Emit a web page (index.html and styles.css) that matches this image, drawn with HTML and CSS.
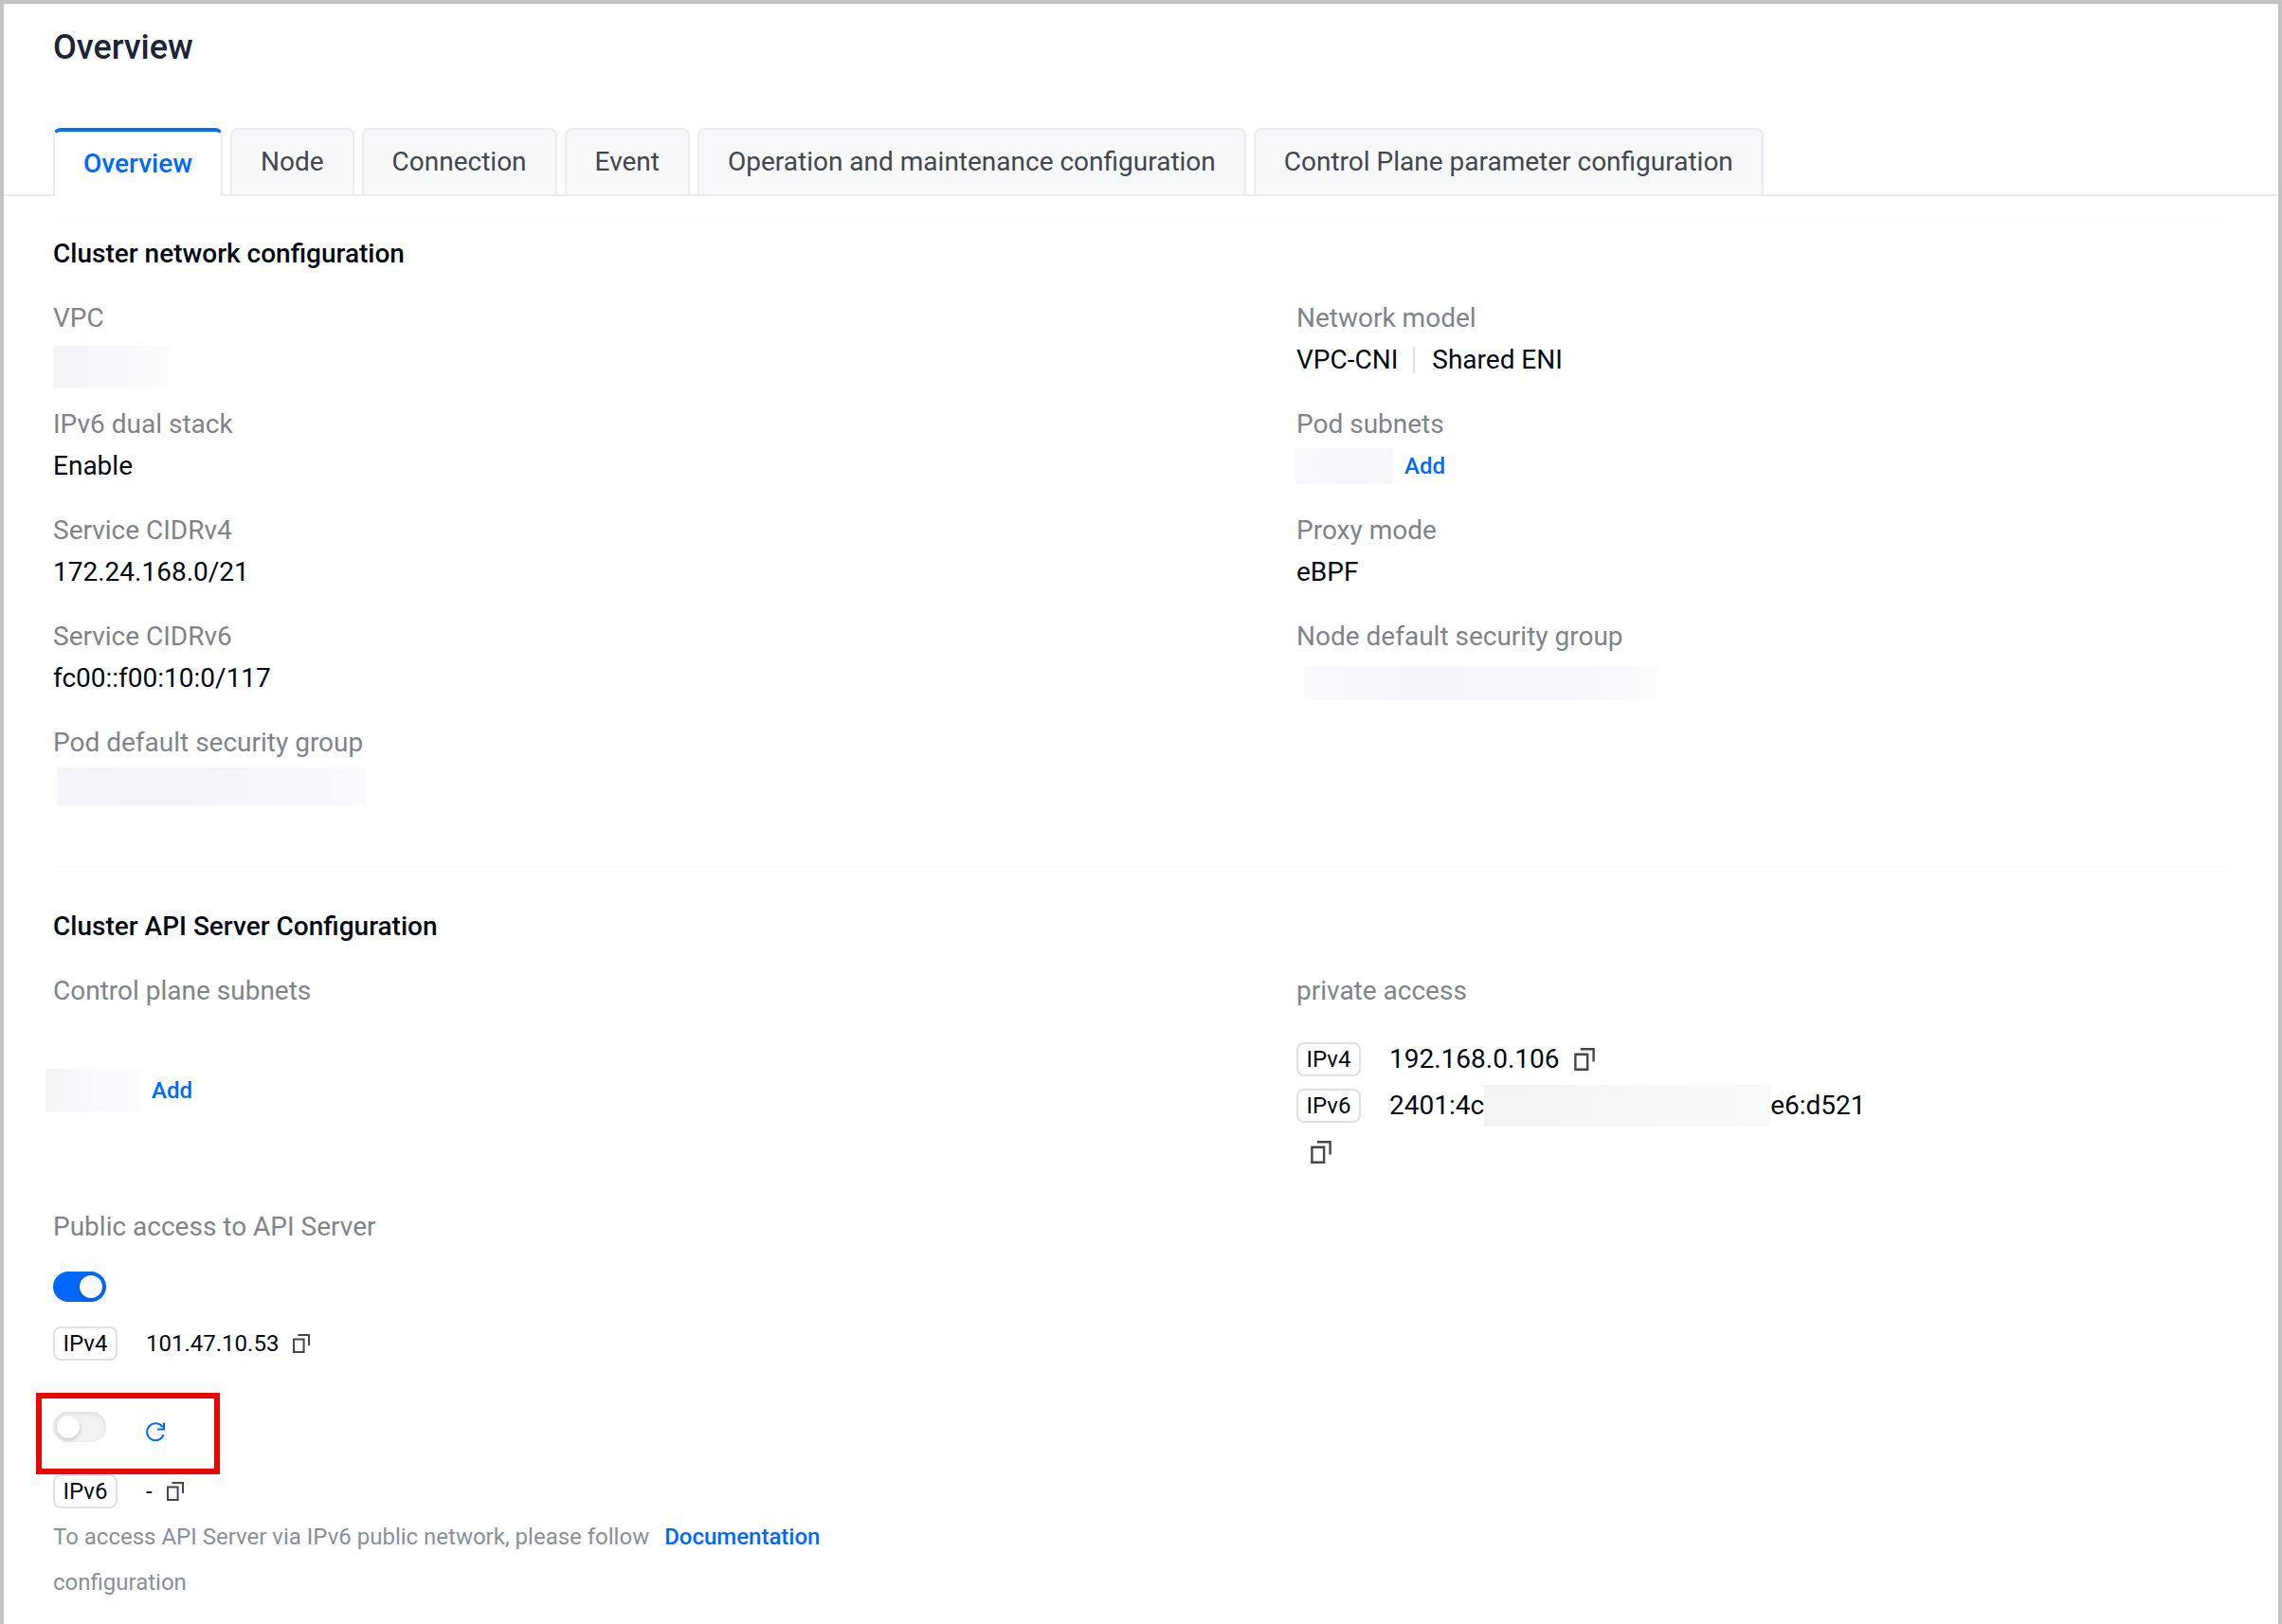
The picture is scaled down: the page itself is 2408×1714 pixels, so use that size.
FILE: index.html
```html
<!DOCTYPE html>
<html lang="en">
<head>
<meta charset="utf-8">
<title>Cluster overview</title>
<link rel="stylesheet" href="styles.css">
</head>
<body>
<svg class="sprite" aria-hidden="true">
  <symbol id="copy" viewBox="0 0 20 20">
    <path d="M2 5.6h10.6V19H2zM6.5 1H18v11" fill="none" stroke="currentColor" stroke-width="2"/>
  </symbol>
  <symbol id="refresh" viewBox="0 0 20 20">
    <path d="M18.6 13.2A9 9 0 1 1 17.6 5.2" fill="none" stroke="currentColor" stroke-width="2"/>
    <path d="M19 .4V7.4H12.2" fill="none" stroke="currentColor" stroke-width="2"/>
  </symbol>
</svg>
<main class="page">
  <h1 class="page-title">Overview</h1>
  <nav class="tabs">
    <button class="tab tab-active" type="button">Overview</button>
    <button class="tab" type="button">Node</button>
    <button class="tab" type="button">Connection</button>
    <button class="tab" type="button">Event</button>
    <button class="tab" type="button">Operation and maintenance configuration</button>
    <button class="tab" type="button">Control Plane parameter configuration</button>
  </nav>

  <section class="section section-network">
    <h2 class="section-title">Cluster network configuration</h2>
    <div class="columns">
      <dl class="fields">
        <div class="field"><dt>VPC</dt><dd><span class="mask mask-vpc"></span></dd></div>
        <div class="field"><dt>IPv6 dual stack</dt><dd>Enable</dd></div>
        <div class="field"><dt>Service CIDRv4</dt><dd>172.24.168.0/21</dd></div>
        <div class="field"><dt>Service CIDRv6</dt><dd>fc00::f00:10:0/117</dd></div>
        <div class="field"><dt>Pod default security group</dt><dd><span class="mask mask-pod-group"></span></dd></div>
      </dl>
      <dl class="fields">
        <div class="field"><dt>Network model</dt><dd><span>VPC-CNI</span><span class="divider"></span><span>Shared ENI</span></dd></div>
        <div class="field"><dt>Pod subnets</dt><dd><span class="mask mask-pod-subnet"></span><a class="link" href="#">Add</a></dd></div>
        <div class="field"><dt>Proxy mode</dt><dd>eBPF</dd></div>
        <div class="field"><dt>Node default security group</dt><dd><span class="mask mask-node-group"></span></dd></div>
      </dl>
    </div>
  </section>

  <section class="section section-api">
    <h2 class="section-title">Cluster API Server Configuration</h2>
    <div class="columns">
      <div>
        <h3 class="label">Control plane subnets</h3>
        <div class="subnets"><span class="mask mask-control"></span><a class="link" href="#">Add</a></div>
      </div>
      <div>
        <h3 class="label">private access</h3>
        <div class="private">
          <div class="address"><span class="badge">IPv4</span><span class="address-text">192.168.0.106</span><button class="icon-button" type="button" aria-label="Copy"><svg class="icon icon-large"><use href="#copy"/></svg></button></div>
          <div class="address"><span class="badge">IPv6</span><span class="address-text">2401:4c<span class="mask mask-address"></span>e6:d521</span></div>
          <div class="address address-wrap"><button class="icon-button" type="button" aria-label="Copy"><svg class="icon icon-large"><use href="#copy"/></svg></button></div>
        </div>
      </div>
    </div>

    <div class="public">
      <h3 class="label">Public access to API Server</h3>
      <div class="switch-row"><input class="switch" type="checkbox" checked aria-label="IPv4 public access"></div>
      <div class="address address-small"><span class="badge">IPv4</span><span class="address-text">101.47.10.53</span><button class="icon-button" type="button" aria-label="Copy"><svg class="icon"><use href="#copy"/></svg></button></div>
      <div class="switch-row switch-row-marked">
        <input class="switch" type="checkbox" aria-label="IPv6 public access">
        <button class="icon-button refresh" type="button" aria-label="Refresh"><svg class="icon"><use href="#refresh"/></svg></button>
      </div>
      <div class="address address-small"><span class="badge">IPv6</span><span class="address-text">-</span><button class="icon-button" type="button" aria-label="Copy"><svg class="icon"><use href="#copy"/></svg></button></div>
      <p class="note">To access API Server via IPv6 public network, please follow <a class="link" href="#">Documentation</a> configuration</p>
    </div>
  </section>
</main>
</body>
</html>
```
FILE: styles.css
```css
* { box-sizing: border-box; }

body {
  margin: 0;
  background: #fff;
  color: #020814;
  font-family: Roboto, "Liberation Sans", sans-serif;
  font-size: 28px;
  line-height: 44px;
}

h1, h2, h3, dl, dd, p { margin: 0; }
button { font: inherit; padding: 0; border: 0; background: none; color: inherit; }

.sprite { display: none; }

.page {
  min-height: 100vh;
  border: 4px solid #c2c2c2;
}

.page-title {
  padding: 22px 52px 0;
  font-size: 36px;
  font-weight: 500;
  line-height: 48px;
  color: #1d2438;
}

/* Tabs */
.tabs {
  display: flex;
  gap: 8px;
  margin-top: 61px;
  padding: 0 52px;
  box-shadow: inset 0 -2px #eaedf1;
}
.tab {
  height: 72px;
  padding: 0 30px;
  border: 2px solid #eaedf1;
  border-radius: 8px 8px 0 0;
  background: #f6f8fa;
  color: #42464e;
}
.tab-active {
  border-top: 4px solid #006eff;
  border-bottom: 0;
  background: #fff;
  color: #0068ff;
  font-weight: 500;
}

/* Sections */
.section {
  margin: 0 52px;
  border-top: 1px solid #fafafb;
}
.section-network { margin-top: 24px; padding: 14px 0 65px; }
.section-api { padding-top: 40px; }
.section-title {
  margin-bottom: 24px;
  font-size: 28px;
  font-weight: 500;
  line-height: 44px;
}
.columns {
  display: grid;
  grid-template-columns: 4fr 3fr;
}
.fields {
  display: flex;
  flex-direction: column;
  gap: 24px;
}
.field dt, .label {
  font-size: 28px;
  font-weight: 400;
  line-height: 44px;
  color: #80838a;
}
.field dd {
  display: flex;
  align-items: center;
  height: 44px;
}
.divider {
  width: 2px;
  height: 28px;
  margin: 0 18px 0 16px;
  background: #dde2e9;
}
.link {
  color: #0068ff;
  font-size: 24px;
  font-weight: 500;
  text-decoration: none;
}

/* Hidden values */
.mask { flex: none; background: #f5f6fb; }
.mask-vpc { width: 122px; height: 44px; margin-top: 14px; background: linear-gradient(90deg, #f4f4f6, #f6f6fb 40%, #fbfbfd); }
.mask-pod-group { width: 326px; height: 40px; margin: 4px 0 0 4px; background: linear-gradient(90deg, #f5f5f8, #f3f4fa 30%, #f5f6fb 75%, #fafafd); }
.mask-pod-subnet { width: 104px; height: 38px; margin: 0 12px 0 -2px; background: linear-gradient(90deg, #fafafd, #f5f5fa 50%, #f6f6fb); }
.mask-node-group { width: 372px; height: 36px; margin: 10px 0 0 8px; background: linear-gradient(90deg, #fafafd, #f4f4fb 30%, #f5f6fb 75%, #fbfbfd); }
.mask-control { width: 100px; height: 46px; margin-right: 12px; background: linear-gradient(90deg, #f4f4f6, #f8f8fc 40%, #fafaff); }
.mask-address { width: 302px; height: 44px; background: linear-gradient(90deg, #f3f3f3, #f9f9f9); }

/* API server */
.subnets {
  display: flex;
  align-items: center;
  margin: 60px 0 0 -8px;
}
.private { padding-top: 25px; }
.address {
  display: flex;
  align-items: center;
  height: 49px;
}
.badge {
  width: 68px;
  height: 36px;
  border: 2px solid #dde2e9;
  border-radius: 8px;
  font-size: 24px;
  line-height: 32px;
  text-align: center;
}
.address-text {
  display: flex;
  align-items: center;
  margin-left: 30px;
}
.address-small { height: 36px; font-size: 24px; }
.icon-button { display: flex; margin-left: 14px; color: #42464e; }
.icon { width: 20px; height: 20px; }
.icon-large { width: 24px; height: 24px; }

.public { margin-top: 33px; }
.switch-row {
  position: relative;
  display: flex;
  align-items: center;
  height: 32px;
  margin: 25px 0 26px;
}
.switch {
  display: flex;
  align-items: center;
  width: 56px;
  height: 32px;
  margin: 0;
  padding: 4px;
  border-radius: 16px;
  background: #f2f3f5;
  box-shadow: inset 0 2px 4px #dcdde0;
  appearance: none;
}
.switch::before {
  content: "";
  width: 24px;
  height: 24px;
  border-radius: 50%;
  background: #fff;
  box-shadow: 0 2px 4px #02081433;
}
.switch:checked {
  justify-content: flex-end;
  background: #0068ff;
  box-shadow: none;
}
.switch-row-marked { margin: 54px 0 34px; }
.switch-row-marked::after {
  content: "";
  position: absolute;
  inset: -20px auto auto -18px;
  width: 182px;
  height: 74px;
  border: 6px solid #eb0606;
  pointer-events: none;
}
.refresh { margin: 10px 0 0 42px; color: #0068ff; }
.note {
  max-width: 840px;
  margin-top: 6px;
  padding-bottom: 28px;
  color: #86909c;
  font-size: 24px;
  line-height: 48px;
}
.note .link { margin: 0 10px; }
```
